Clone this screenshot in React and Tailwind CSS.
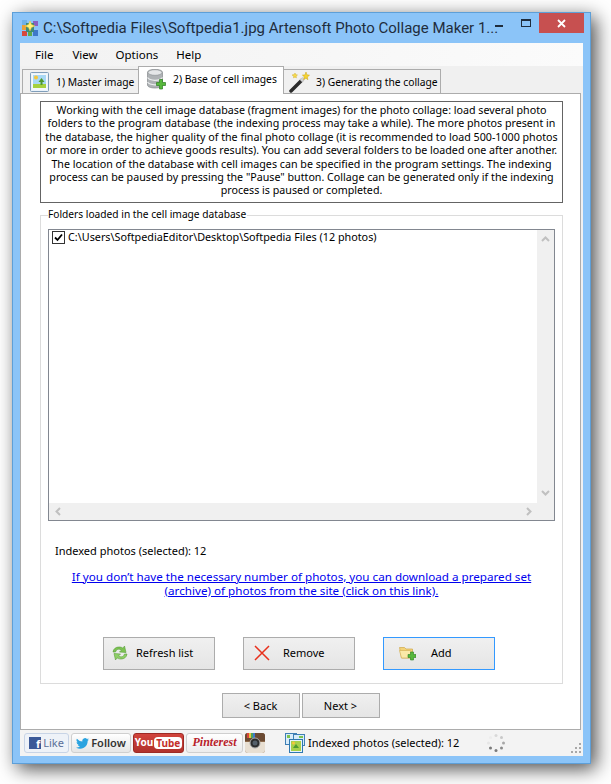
import { useState } from "react";

const FONT = "font-['Noto_Sans','Open_Sans',sans-serif]";

const AppIcon = () => (
  <svg width="16" height="16" viewBox="0 0 16 16" className="shrink-0">
    <rect x="0" y="0" width="5" height="5" fill="#6fb1e8" />
    <rect x="0" y="5" width="4" height="5" fill="#e9a13b" />
    <rect x="0" y="11" width="5" height="5" fill="#d8473d" />
    <rect x="6" y="11" width="4" height="5" fill="#5fa84a" />
    <rect x="11" y="10" width="5" height="6" fill="#3f78c9" />
    <rect x="11" y="1" width="5" height="5" fill="#8a5fc0" />
    <rect x="4" y="3" width="8" height="9" fill="#3d8a78" />
    <path d="M8 1l1.500 3.500L13 6l-3.500 1.500L8 11 6.500 7.500 3 6l3.500-1.500z" fill="#fff27a" stroke="#e8c22e" strokeWidth="0.500" />
  </svg>
);

const MasterIcon = () => (
  <svg width="19" height="20" viewBox="0 0 19 20" className="shrink-0">
    <rect x="0.500" y="0.500" width="18" height="19" rx="1" fill="#eaf3fb" stroke="#7f9db9" />
    <rect x="2" y="2" width="15" height="16" fill="#f4f8fb" />
    <rect x="3" y="3" width="13" height="9" fill="#a8d8f5" />
    <path d="M3 12h13v4H3z" fill="#a5d13e" />
    <circle cx="6" cy="5.500" r="2" fill="#f6c63a" />
    <path d="M11.500 6l3 4h-2v3h-2v-3h-2z" fill="#4f9a2e" />
  </svg>
);

const DatabaseIcon = () => (
  <svg width="20" height="21" viewBox="0 0 20 21" className="shrink-0">
    <path d="M.5 3.500C.5 1.500 3.500.5 8 .5s7.500 1 7.500 3v12.500c0 1.700-3 3-7.500 3s-7.500-1.300-7.500-3z" fill="#aeb2b5" stroke="#85898c" strokeWidth="0.700" />
    <ellipse cx="8" cy="3.500" rx="7" ry="2.800" fill="#e4e6e8" stroke="#8c9093" strokeWidth="0.600" />
    <path d="M.5 8.500c1 1.800 3.800 2.800 7.500 2.800s6.500-1 7.500-2.800M.5 13c1 1.800 3.800 2.800 7.500 2.800s6.500-1 7.500-2.800" fill="none" stroke="#eceeef" strokeWidth="1.200" />
    <path d="M9.500 13.500h3v-3h3v3h3v3h-3v3.500h-3v-3.500h-3z" fill="#57b83c" stroke="#2e7d22" strokeWidth="0.700" />
  </svg>
);

const WandIcon = () => (
  <svg width="22" height="22" viewBox="0 0 22 22" className="shrink-0">
    <path d="M2 20L13 9" stroke="#2b2b2b" strokeWidth="3.500" strokeLinecap="round" />
    <path d="M12 10l3-3" stroke="#d0d0d0" strokeWidth="3.500" />
    <path d="M17 1l.8 2.700 2.700.5-2.200 1.800.6 2.700-2-1.500-2.300 1.400.8-2.700-2-1.800 2.600-.2z" fill="#f6d32d" stroke="#c9a20c" strokeWidth="0.500" />
    <path d="M6 2l.7 1.600 1.800.4-1.400 1.100.3 1.800L6 6 4.500 6.900l.3-1.800L3 4l2.200-.4z" fill="#f8dc4a" stroke="#c9a20c" strokeWidth="0.400" />
  </svg>
);

const RefreshIcon = () => (
  <svg width="18" height="16" viewBox="0 0 18 16" className="shrink-0">
    <path d="M2 7c.5-3.500 3-5 6-5 2 0 3 .5 4 1.200L13.500 1l1.500 6.500-6.500-.5 2-2c-1-.7-2-1-3-.8-1.500.2-2.500 1-3 2.800z" fill="#7cc352" stroke="#5a9e3a" strokeWidth="0.600" />
    <path d="M16 9c-.5 3.500-3 5-6 5-2 0-3-.5-4-1.200L4.500 15 3 8.500l6.500.5-2 2c1 .7 2 1 3 .8 1.500-.2 2.500-1 3-2.800z" fill="#8fcf66" stroke="#5a9e3a" strokeWidth="0.600" />
  </svg>
);

const CrossIcon = () => (
  <svg width="16" height="16" viewBox="0 0 16 16" className="shrink-0">
    <path d="M1 1l14 14M15 1L1 15" stroke="#e8301c" strokeWidth="1.500" />
  </svg>
);

const FolderAddIcon = () => (
  <svg width="17" height="16" viewBox="0 0 17 16" className="shrink-0">
    <path d="M.5 2.500h5l1.500 1.500h6.500v9H2.500z" fill="#f3d377" stroke="#cfa74a" strokeWidth="0.700" />
    <path d="M.5 5.500h11l2 7.500H2.500z" fill="#fbe9a8" stroke="#d6b35c" strokeWidth="0.700" />
    <path d="M9 9.500h2.500V7h3v2.500H17v3h-2.500V15h-3v-2.500H9z" fill="#57b83c" stroke="#2e7d22" strokeWidth="0.600" />
  </svg>
);

const PhotosIcon = () => (
  <svg width="20" height="20" viewBox="0 0 20 20" className="shrink-0">
    <rect x="0.500" y="0.500" width="11" height="11" fill="#d9ecfa" stroke="#3f7fb5" />
    <rect x="8.500" y="1.500" width="11" height="11" fill="#d9ecfa" stroke="#3f7fb5" />
    <rect x="4.500" y="6.500" width="13" height="13" fill="#e7f3fc" stroke="#2f78b0" />
    <rect x="6" y="8" width="10" height="10" fill="#a7d04a" />
    <circle cx="8.500" cy="10" r="1.500" fill="#f6c63a" />
    <path d="M11 11l3 4h-6z" fill="#4f9a2e" />
    <rect x="2" y="2" width="3" height="3" fill="#7cc352" />
    <rect x="14" y="3" width="4" height="2" fill="#7cc352" />
  </svg>
);

const Spinner = () => {
  const dots = [
    [9, 1.500, "#d8d8d8"], [14.500, 3.500, "#c8c8c8"], [16.500, 9, "#a8a8a8"], [14.500, 14, "#8a8a8a"],
    [9, 16.500, "#7a7a7a"], [3.500, 14, "#7a7a7a"], [1.500, 9, "#e6e6e6"], [3.500, 3.500, "#ececec"],
  ];
  return (
    <svg width="18" height="18" viewBox="0 0 18 18" className="shrink-0">
      {dots.map(([cx, cy, fill]) => (
        <circle key={`${cx}-${cy}`} cx={cx} cy={cy} r="1.500" fill={fill} />
      ))}
    </svg>
  );
};

const Grip = () => (
  <svg width="12" height="12" viewBox="0 0 12 12" className="shrink-0" fill="#a8a8a8">
    <rect x="9" y="1" width="2" height="2" />
    <rect x="5" y="5" width="2" height="2" />
    <rect x="9" y="5" width="2" height="2" />
    <rect x="1" y="9" width="2" height="2" />
    <rect x="5" y="9" width="2" height="2" />
    <rect x="9" y="9" width="2" height="2" />
  </svg>
);

const Instagram = () => (
  <svg width="20" height="20" viewBox="0 0 20 20" className="shrink-0">
    <rect x="0" y="0" width="20" height="20" rx="3" fill="#8c6a4c" />
    <path d="M0 8V3a3 3 0 0 1 3-3h14a3 3 0 0 1 3 3v5h-6a5 5 0 0 0-8 0z" fill="#6b4a33" />
    <rect x="2" y="0" width="2" height="5" fill="#d8453c" />
    <rect x="4" y="0" width="2" height="5" fill="#e9c23e" />
    <rect x="6" y="0" width="2" height="5" fill="#4fa35a" />
    <rect x="8" y="0" width="2" height="5" fill="#3f78c9" />
    <path d="M0 9h6a5 5 0 0 0 8 0h6v8a3 3 0 0 1-3 3H3a3 3 0 0 1-3-3z" fill="#e8dfd2" />
    <circle cx="10" cy="10" r="5" fill="#2c2c2c" stroke="#aaa" />
    <circle cx="10" cy="10" r="2.500" fill="#55606a" />
  </svg>
);

const Scrollbars = () => (
  <>
    <div className="absolute right-0 top-0 bottom-0 w-[17px] bg-[#f0f0f0] flex flex-col items-center justify-between pt-[6px] pb-[24px]">
      <svg width="9" height="6" viewBox="0 0 9 6"><path d="M1 5l3.500-3.500L8 5" fill="none" stroke="#c0c0c0" strokeWidth="2" /></svg>
      <svg width="9" height="6" viewBox="0 0 9 6"><path d="M1 1l3.500 3.500L8 1" fill="none" stroke="#c0c0c0" strokeWidth="2" /></svg>
    </div>
    <div className="absolute left-0 right-0 bottom-0 h-[17px] bg-[#f0f0f0] flex items-center justify-between pl-[6px] pr-[22px]">
      <svg width="6" height="9" viewBox="0 0 6 9"><path d="M5 1L1.500 4.500 5 8" fill="none" stroke="#c0c0c0" strokeWidth="2" /></svg>
      <svg width="6" height="9" viewBox="0 0 6 9"><path d="M1 1l3.500 3.500L1 8" fill="none" stroke="#c0c0c0" strokeWidth="2" /></svg>
    </div>
  </>
);

const Tab = ({ icon, label, active, className }) => (
  <div
    className={`flex items-center border border-[#acacac] border-b-0 text-[10.300px] ${
      active ? "relative h-[28px] bg-white -mb-px z-10" : "h-[24px] bg-[#f0f0f0]"
    } ${className}`}
  >
    {icon}
    <span className={`whitespace-nowrap ${active ? "" : "mt-[2px]"}`}>{label}</span>
  </div>
);

const ActionButton = ({ icon, label, primary, labelClass }) => (
  <button
    className={`w-[112px] h-[33px] flex items-center bg-gradient-to-b from-[#f0f0f0] to-[#e5e5e5] border ${
      primary ? "border-[#3399ff]" : "border-[#acacac]"
    } ${labelClass}`}
  >
    {icon}
    <span>{label}</span>
  </button>
);

const NavButton = ({ label }) => (
  <button className="w-[78px] h-[25px] bg-gradient-to-b from-[#f0f0f0] to-[#e5e5e5] border border-[#acacac]">
    {label}
  </button>
);

export default function App() {
  const [checked, setChecked] = useState(true);

  return (
    <div className={`min-h-screen bg-white pt-[12px] pl-[12px] text-[11px] leading-[13.500px] text-black ${FONT}`}>
      <div className="w-[579px] h-[752px] flex flex-col bg-[#8bc4f8] border border-[#5d9fd8] px-[7px] pb-[7px] shadow-[5px_5px_18px_rgba(0,0,0,0.7)]">
        {/* Title bar */}
        <div className="h-[29px] shrink-0 flex items-start -mx-[7px]">
          <div className="flex items-center gap-[5px] pl-[9px] pt-[5px] flex-1 min-w-0">
            <AppIcon />
            <span className="font-['Roboto',sans-serif] text-[15px] leading-[20px] text-[#1f2d3d] whitespace-nowrap">
              C:\Softpedia Files\Softpedia1.jpg Artensoft Photo Collage Maker 1...
            </span>
          </div>
          <div className="flex items-start">
            <div className="w-[27px] h-[20px] flex items-center justify-center">
              <div className="w-[8px] h-[2px] bg-[#1f2d3d] mt-[5px]" />
            </div>
            <div className="w-[27px] h-[20px] flex items-center justify-center">
              <div className="w-[10px] h-[8px] border border-[#1f2d3d] border-t-2" />
            </div>
            <div className="w-[45px] h-[20px] mr-[6px] bg-[#c75050] flex items-center justify-center">
              <svg width="9" height="9" viewBox="0 0 9 9"><path d="M1 1l7 7M8 1L1 8" stroke="#fff" strokeWidth="1.800" /></svg>
            </div>
          </div>
        </div>

        <div className="flex-1 flex flex-col bg-[#f0f0f0] min-h-0 mt-px">
          {/* Menu */}
          <div className="h-[23px] shrink-0 bg-gradient-to-r from-[#f2f2f2] to-[#fbfbfb] flex items-center gap-[18px] pl-[15px] text-[11.500px]">
            <span>File</span>
            <span className="ml-px">View</span>
            <span>Options</span>
            <span>Help</span>
          </div>

          {/* Tabs */}
          <div className="h-[27px] shrink-0 flex items-end pl-[2px]">
            <Tab className="w-[117px] pl-[7px] gap-[7px]" icon={<MasterIcon />} label="1) Master image" />
            <Tab active className="w-[146px] -ml-px pl-[8px] gap-[6px] pb-[2px]" icon={<DatabaseIcon />} label="2) Base of cell images" />
            <Tab className="w-[158px] -ml-px pl-[5px] gap-[5px]" icon={<WandIcon />} label="3) Generating the collage" />
          </div>

          {/* Panel */}
          <div className="h-[637px] shrink-0 bg-white border border-[#acacac] mr-[2px] flex flex-col pl-[19px] pr-[17px] pt-[7px]">
            <div className="h-[102px] shrink-0 border border-[#646464] text-center pt-[2px] text-[10.700px] leading-[13.400px] whitespace-nowrap">
              <div>Working with the cell image database (fragment images) for the photo collage: load several photo</div>
              <div>folders to the program database (the indexing process may take a while). The more photos present in</div>
              <div>the database, the higher quality of the final photo collage (it is recommended to load 500-1000 photos</div>
              <div>or more in order to achieve goods results). You can add several folders to be loaded one after another.</div>
              <div>The location of the database with cell images can be specified in the program settings. The indexing</div>
              <div>process can be paused by pressing the "Pause" button. Collage can be generated only if the indexing</div>
              <div>process is paused or completed.</div>
            </div>

            {/* Group box */}
            <div className="relative h-[469px] mt-[12px] shrink-0 border border-[#dcdcdc] flex flex-col px-[7px] pt-[13px]">
              <span className="absolute left-[7px] -top-[8px] bg-white pr-[1px] text-[10.200px]">Folders loaded in the cell image database</span>

              <div className="relative h-[292px] shrink-0 border border-[#828790] pl-[3px] pt-px">
                <label className="flex items-center gap-[3px] text-[10.800px]">
                  <input
                    type="checkbox"
                    checked={checked}
                    onChange={(e) => setChecked(e.target.checked)}
                    className="peer sr-only"
                  />
                  <span className="w-[13px] h-[13px] shrink-0 flex items-center justify-center border border-[#333] bg-white">
                    {checked && (
                      <svg width="9" height="9" viewBox="0 0 9 9"><path d="M1 4.500l2.500 2.500L8 1.500" fill="none" stroke="#000" strokeWidth="1.800" /></svg>
                    )}
                  </span>
                  <span className="-mt-[2px]">C:\Users\SoftpediaEditor\Desktop\Softpedia Files (12 photos)</span>
                </label>
                <Scrollbars />
              </div>

              <div className="mt-[23px] pl-[7px]">Indexed photos (selected): 12</div>

              <a href="#" className="block mt-[12px] text-center text-[11.650px] leading-[14px] text-[#0000ee] underline">
                If you don’t have the necessary number of photos, you can download a prepared set
                <br />
                (archive) of photos from the site (click on this link).
              </a>

              <div className="mt-[39px] flex gap-[28px] pl-[55px]">
                <ActionButton labelClass="pl-[7px] gap-[7px]" icon={<RefreshIcon />} label="Refresh list" />
                <ActionButton labelClass="pl-[10px] gap-[13px]" icon={<CrossIcon />} label="Remove" />
                <ActionButton primary labelClass="pl-[15px] gap-[15px]" icon={<FolderAddIcon />} label="Add" />
              </div>
            </div>

            <div className="mt-[9px] flex justify-center gap-[2px] pr-[2px]">
              <NavButton label="< Back" />
              <NavButton label="Next >" />
            </div>
          </div>

          {/* Status bar */}
          <div className="flex-1 flex items-center bg-[#f3f3f3] pl-[4px] pr-px">
            <div className="h-[20px] w-[45px] flex items-center justify-center gap-[2px] rounded-[3px] border border-[#c8d4e6] bg-[#eef2f8] text-[11px] text-[#5a6f99]">
              <span className="w-[12px] h-[12px] bg-[#3b5998] text-white font-bold text-[11px] leading-[13px] text-right pr-px">f</span>
              Like
            </div>
            <div className="h-[20px] w-[60px] ml-[2px] flex items-center justify-center gap-[2px] rounded-[3px] border border-[#cfcfcf] bg-gradient-to-b from-white to-[#e6e6e6] text-[11px] font-semibold text-[#333]">
              <svg width="13" height="11" viewBox="0 0 24 20"><path d="M24 2.400a9.800 9.800 0 0 1-2.800.8A4.900 4.900 0 0 0 23.300.5a9.800 9.800 0 0 1-3.100 1.200 4.900 4.900 0 0 0-8.400 4.500A14 14 0 0 1 1.700 1a4.900 4.900 0 0 0 1.500 6.600 4.900 4.900 0 0 1-2.200-.6 4.900 4.900 0 0 0 3.900 4.900 4.900 4.900 0 0 1-2.200.1 4.900 4.900 0 0 0 4.600 3.400A9.900 9.900 0 0 1 0 17.400 14 14 0 0 0 21.500 5a9.900 9.900 0 0 0 2.500-2.600z" fill="#2aa3e0" /></svg>
              Follow
            </div>
            <div className="h-[20px] w-[51px] ml-[2px] flex items-center justify-center gap-[1px] rounded-[3px] border border-[#9c2a25] bg-gradient-to-b from-[#d2443c] to-[#b0322c] text-[10px] font-bold text-white">
              You
              <span className="rounded-[4px] bg-white text-[#c4302b] px-[2px] leading-[12px]">Tube</span>
            </div>
            <div className="h-[20px] w-[57px] ml-[2px] flex items-center justify-center rounded-[3px] border border-[#cfcfcf] bg-gradient-to-b from-white to-[#ececec] font-['Liberation_Serif',serif] italic font-bold text-[12px] text-[#b8212b]">
              Pinterest
            </div>
            <div className="ml-[2px]"><Instagram /></div>
            <div className="ml-[20px]"><PhotosIcon /></div>
            <span className="ml-[3px] text-[11px]">Indexed photos (selected): 12</span>
            <div className="ml-auto mr-[65px]"><Spinner /></div>
            <div className="self-end mb-[2px]"><Grip /></div>
          </div>
        </div>
      </div>
    </div>
  );
}
